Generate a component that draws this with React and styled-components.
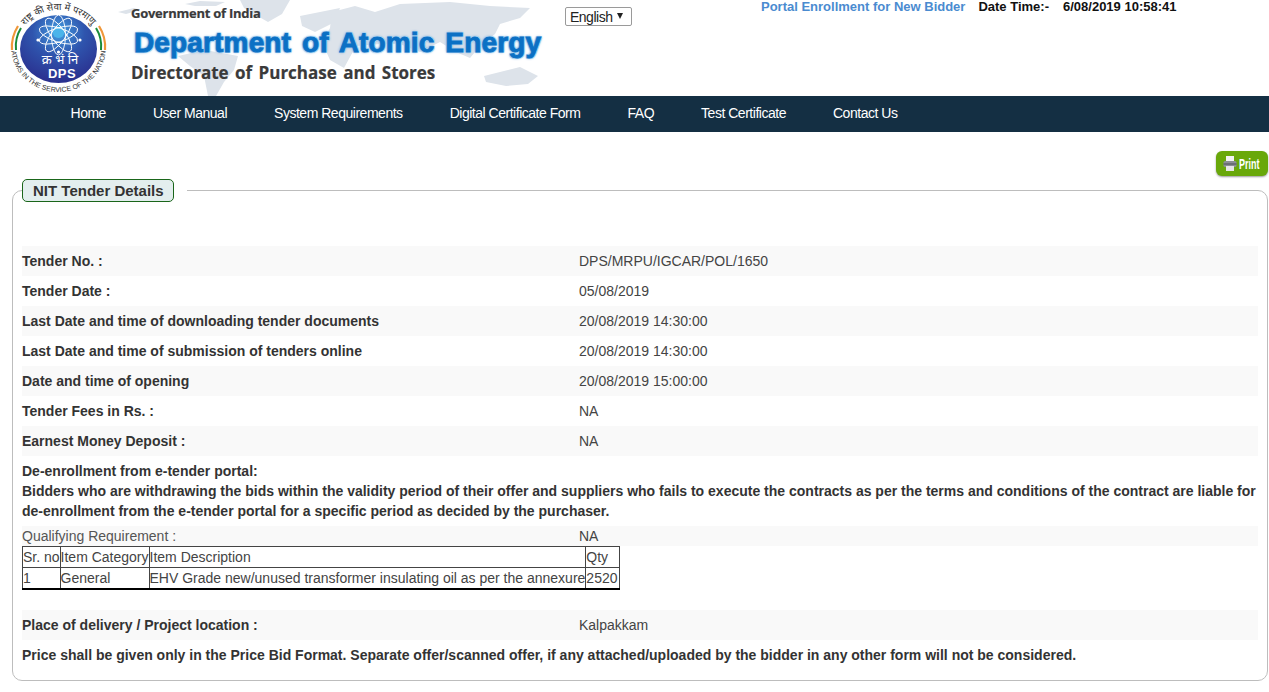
import React from "react";
import styled, { createGlobalStyle } from "styled-components";

const Global = createGlobalStyle`
  html, body { margin: 0; padding: 0; background: #fff; }
  body { font-family: "Liberation Sans", Arial, sans-serif; font-size: 14px; color: #333; overflow: hidden; }
`;

const Header = styled.header`
  position: relative;
  height: 96px;
  display: flex;
  overflow: hidden;
`;
const MapArt = styled.svg`
  position: absolute;
  left: 110px;
  top: 0;
`;
const LogoWrap = styled.div`
  width: 131px;
  flex: none;
  position: relative;
`;
const Brand = styled.div`
  position: relative;
  width: 434px;
  flex: none;
  display: flex;
  flex-direction: column;
`;
const Gov = styled.div`
  font: bold 13px "Open Sans", sans-serif;
  color: #3a3a3a;
  -webkit-text-stroke: 0.2px #3a3a3a;
  letter-spacing: -0.25px;
  margin-top: 4px;
  height: 18px;
`;
const Dept = styled.div`
  font: bold 28px "Liberation Sans", sans-serif;
  color: #0b70c4;
  -webkit-text-stroke: 0.9px #0b70c4;
  text-shadow: 1px 0 #a9d4f3, -1px 0 #a9d4f3, 0 1px #a9d4f3, 0 -1px #a9d4f3, 1px 1px #a9d4f3, -1px -1px #a9d4f3, 1px -1px #a9d4f3, -1px 1px #a9d4f3, 0 0 3px #2f7fc8;
  margin: 3px 0 0 3px;
  letter-spacing: 0.15px;
  word-spacing: 3px;
  white-space: nowrap;
  height: 36px;
  line-height: 36px;
`;
const Dir = styled.div`
  font: bold 17px "Open Sans", sans-serif;
  color: #3a3a3a;
  -webkit-text-stroke: 0.2px #3a3a3a;
  word-spacing: 2px;
  white-space: nowrap;
  margin-top: 0;
`;
const LangSelect = styled.div`
  width: 67px;
  height: 19px;
  margin: 7px 0 0 0;
  box-sizing: border-box;
  border: 1px solid #9a9a9a;
  border-radius: 2px;
  background: #fff;
  display: flex;
  align-items: center;
  padding-left: 4px;
  gap: 5px;
  color: #222;
  letter-spacing: -0.5px;
  flex: none;
`;
const Caret = styled.span`
  width: 0;
  height: 0;
  border-left: 3.5px solid transparent;
  border-right: 3.5px solid transparent;
  border-top: 6px solid #222;
  margin-top: -1px;
`;
const Status = styled.div`
  display: flex;
  margin-left: 129px;
  height: 16px;
  line-height: 14px;
  white-space: nowrap;
`;
const Enroll = styled.span`
  color: #4a8bd0;
  font-weight: bold;
  font-size: 13px;
  margin-right: 13px;
`;
const DateLabel = styled.span`
  color: #111;
  font-weight: bold;
  font-size: 13px;
  margin-right: 14px;
`;
const Nav = styled.nav`
  height: 36px;
  background: #142f43;
  display: flex;
  align-items: center;
  padding: 0 0 2px 70.5px;
  box-sizing: border-box;
  gap: 47px;
`;
const NavLink = styled.a`
  color: #fff;
  font-size: 14px;
  letter-spacing: -0.48px;
`;
const Main = styled.main`
  padding: 19px 1px 0 12px;
`;
const Toolbar = styled.div`
  display: flex;
  justify-content: flex-end;
  height: 25px;
  margin-bottom: 3px;
`;
const PrintBtn = styled.button`
  width: 52px;
  height: 25px;
  border: 0;
  padding: 0 0 0 7px;
  border-radius: 6px;
  background: #69a80a;
  box-shadow: 0 1px 2px rgba(0,0,0,.4);
  color: #fff;
  display: flex;
  align-items: center;
  gap: 2px;
  font: bold 15px "Liberation Sans", sans-serif;
`;
const PrintLabel = styled.span`
  display: inline-block;
  width: 22px;
  transform: scaleX(0.6);
  transform-origin: left center;
`;
const Panel = styled.fieldset`
  margin: 0;
  padding: 0 9px 17px 9px;
  border: 1px solid #bdbdbd;
  border-radius: 10px;
  height: 502px;
  box-sizing: border-box;
  min-width: 0;
`;
const Legend = styled.legend`
  padding: 0 13px 0 0;
  margin: 0;
`;
const LegendBox = styled.div`
  width: 152px;
  height: 23px;
  padding-left: 10px;
  box-sizing: border-box;
  border: 1px solid #1a661a;
  border-radius: 5px;
  background: #e3eeee;
  color: #333;
  font-weight: bold;
  font-size: 15px;
  line-height: 21px;
`;
const Rows = styled.div`
  padding-top: 44px;
`;
const Row = styled.div`
  display: flex;
  align-items: center;
  height: ${(p) => p.$h || 30}px;
  background: ${(p) => (p.$shade ? "#f9f9f9" : "#fff")};
  font-weight: ${(p) => (p.$plain ? "normal" : "bold")};
`;
const Label = styled.div`
  width: 557px;
  flex: none;
  color: ${(p) => (p.$plain ? "#555" : "#333")};
`;
const Value = styled.div`
  font-weight: normal;
  color: #444;
`;
const Notice = styled.div`
  font-weight: bold;
  line-height: 20px;
  color: #333;
  padding: 5px 0;
`;
const ItemTable = styled.table`
  border-collapse: collapse;
  border: 1px solid #000;
  border-bottom-width: 2px;
  color: #444;
  font-size: 14px;
  margin: 0;
  & td { border: 1px solid #444; padding: 0; height: 20px; white-space: nowrap; }
  & td:last-child { padding-right: 1px; }
`;
const Spacer = styled.div`
  height: 20px;
`;
const Footnote = styled.div`
  font-weight: bold;
  color: #333;
  padding-top: 7px;
  line-height: 16px;
`;

const orbits = [0, 36, 72, -36, -72];

const Logo = () => (
  <svg width="122" height="96" viewBox="0 0 122 96">
    <defs>
      <path id="arcTop" d="M18 46 A40.5 36 0 0 1 99 46" />
      <path id="arcBottom" d="M11 47 A47.5 45 0 0 0 106 47" />
      <radialGradient id="disc" cx="50%" cy="25%" r="75%">
        <stop offset="0" stopColor="#45a0e2" />
        <stop offset="0.45" stopColor="#2f55ae" />
        <stop offset="1" stopColor="#2a2f8e" />
      </radialGradient>
    </defs>
    <ellipse cx="58.5" cy="49" rx="38.5" ry="34" fill="url(#disc)" />
    <circle cx="58.5" cy="32" r="6" fill="#4ab4ea" />
    <g fill="none" stroke="#fff" strokeWidth="0.9">
      {orbits.map((a) => (
        <ellipse key={a} cx="58.5" cy="35" rx="7" ry="20" transform={`rotate(${a} 58.5 35)`} />
      ))}
    </g>
    <g fill="#fff">
      <circle cx="38" cy="40" r="1.6" />
      <circle cx="80" cy="40" r="1.6" />
      <circle cx="58.5" cy="52" r="1.6" />
    </g>
    <text x="60" y="64" textAnchor="middle" fill="#fff" fontSize="13" fontFamily="Noto Sans, Noto Sans CJK SC, sans-serif">क्र भं नि</text>
    <text x="62" y="78" textAnchor="middle" fill="#fff" fontSize="13" fontWeight="bold" letterSpacing="0.4" fontFamily="Liberation Sans, sans-serif">DPS</text>
    <text fontSize="9.5" fill="#333" fontFamily="Noto Sans, sans-serif">
      <textPath href="#arcTop" startOffset="50%" textAnchor="middle">राष्ट्र की सेवा में परमाणु</textPath>
    </text>
    <text fontSize="7" fill="#333" fontFamily="Liberation Sans, sans-serif">
      <textPath href="#arcBottom" startOffset="50%" textAnchor="middle">ATOMS IN THE SERVICE OF THE NATION</textPath>
    </text>
    <path d="M12 50 A46.5 42 0 0 1 18 26" fill="none" stroke="#f0973a" strokeWidth="2.2" />
    <path d="M16 50 A42.5 38 0 0 1 21 28" fill="none" stroke="#1a8b3a" strokeWidth="2" />
    <path d="M105 50 A46.5 42 0 0 0 99 26" fill="none" stroke="#f0973a" strokeWidth="2.2" />
    <path d="M101 50 A42.5 38 0 0 0 96 28" fill="none" stroke="#1a8b3a" strokeWidth="2" />
  </svg>
);

const WorldMap = () => (
  <MapArt width="450" height="96" viewBox="110 0 450 96" fill="#dde3ea">
    <path d="M118 12 L134 8 L140 10 L126 14Z" />
    <path d="M185 4 L200 1 L225 2 L216 6 L195 6Z" />
    <path d="M240 0 L290 0 L282 14 L268 22 L254 14 L244 8Z" />
    <path d="M178 56 L205 50 L238 56 L234 70 L224 82 L216 96 L208 96 L204 76 L190 66Z" />
    <path d="M300 16 L340 8 L335 22 L315 32 L302 26Z" />
    <path d="M332 12 L355 6 L375 12 L400 4 L450 2 L490 6 L530 8 L520 18 L500 24 L495 34 L480 46 L470 58 L456 52 L440 42 L420 52 L400 44 L380 44 L356 46 L344 68 L330 60 L322 42 L330 28Z" />
    <path d="M484 76 L500 72 L520 67 L538 76 L528 84 L506 86 L486 82Z" />
  </MapArt>
);

const PrinterIcon = () => (
  <svg width="14" height="17" viewBox="0 0 14 17">
    <rect x="3" y="1" width="8" height="6" fill="#f2f2f2" />
    <rect x="0.5" y="6" width="13" height="6" rx="1.5" fill="#8a8f94" />
    <rect x="0.5" y="8.5" width="13" height="1" fill="#4c5056" />
    <rect x="3" y="11" width="8" height="5" fill="#e6e6e6" />
  </svg>
);

const details = [
  ["Tender No. :", "DPS/MRPU/IGCAR/POL/1650"],
  ["Tender Date :", "05/08/2019"],
  ["Last Date and time of downloading tender documents", "20/08/2019 14:30:00"],
  ["Last Date and time of submission of tenders online", "20/08/2019 14:30:00"],
  ["Date and time of opening", "20/08/2019 15:00:00"],
  ["Tender Fees in Rs. :", "NA"],
  ["Earnest Money Deposit :", "NA"],
];

const navItems = ["Home", "User Manual", "System Requirements", "Digital Certificate Form", "FAQ", "Test Certificate", "Contact Us"];

export default function App() {
  return (
    <>
      <Global />
      <Header>
        <WorldMap />
        <LogoWrap><Logo /></LogoWrap>
        <Brand>
          <Gov>Government of India</Gov>
          <Dept>Department of Atomic Energy</Dept>
          <Dir>Directorate of Purchase and Stores</Dir>
        </Brand>
        <LangSelect>English <Caret /></LangSelect>
        <Status>
          <Enroll>Portal Enrollment for New Bidder</Enroll>
          <DateLabel>Date Time:-</DateLabel>
          <DateLabel>6/08/2019 10:58:41</DateLabel>
        </Status>
      </Header>
      <Nav>
        {navItems.map((n) => <NavLink key={n}>{n}</NavLink>)}
      </Nav>
      <Main>
        <Toolbar>
          <PrintBtn><PrinterIcon /><PrintLabel>Print</PrintLabel></PrintBtn>
        </Toolbar>
        <Panel>
          <Legend><LegendBox>NIT Tender Details</LegendBox></Legend>
          <Rows>
            {details.map(([l, v], i) => (
              <Row key={l} $shade={i % 2 === 0}>
                <Label>{l}</Label>
                <Value>{v}</Value>
              </Row>
            ))}
            <Notice>
              De-enrollment from e-tender portal:<br />
              Bidders who are withdrawing the bids within the validity period of their offer and suppliers who fails to execute the contracts as per the terms and conditions of the contract are liable for de-enrollment from the e-tender portal for a specific period as decided by the purchaser.
            </Notice>
            <Row $shade $plain $h={20}>
              <Label $plain>Qualifying Requirement :</Label>
              <Value>NA</Value>
            </Row>
            <ItemTable>
              <tbody>
                <tr><td>Sr. no</td><td>Item Category</td><td>Item Description</td><td>Qty</td></tr>
                <tr><td>1</td><td>General</td><td>EHV Grade new/unused transformer insulating oil as per the annexure</td><td>2520</td></tr>
              </tbody>
            </ItemTable>
            <Spacer />
            <Row $shade>
              <Label>Place of delivery / Project location :</Label>
              <Value>Kalpakkam</Value>
            </Row>
            <Footnote>Price shall be given only in the Price Bid Format. Separate offer/scanned offer, if any attached/uploaded by the bidder in any other form will not be considered.</Footnote>
          </Rows>
        </Panel>
      </Main>
    </>
  );
}
